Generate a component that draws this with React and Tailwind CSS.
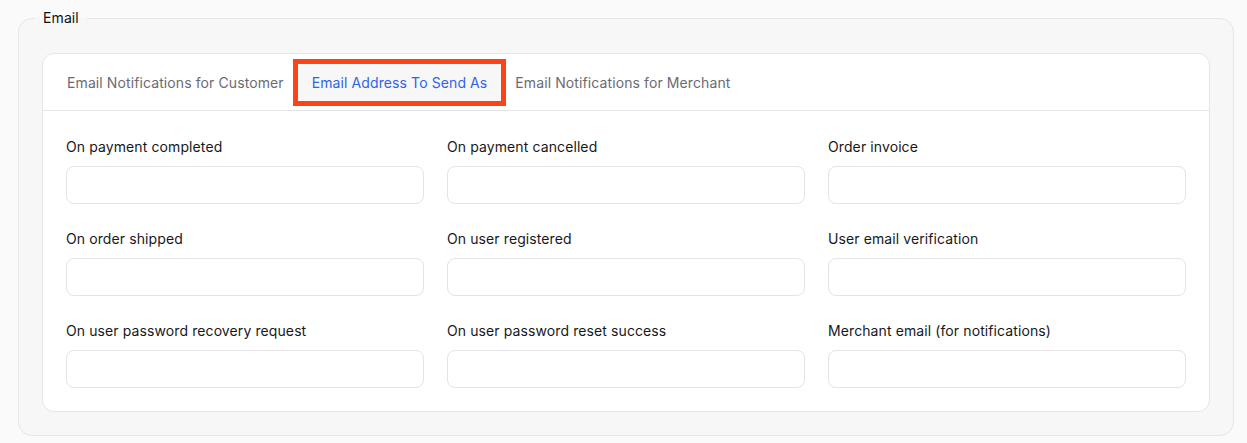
import React from "react";

const fields = [
  "On payment completed",
  "On payment cancelled",
  "Order invoice",
  "On order shipped",
  "On user registered",
  "User email verification",
  "On user password recovery request",
  "On user password reset success",
  "Merchant email (for notifications)",
];

export default function App() {
  return (
    <div
      className="w-[1247px] h-[443px] bg-[#fafafa] pt-2 tracking-[0.1px]"
      style={{ fontFamily: "Inter, 'Liberation Sans', sans-serif" }}
    >
      <fieldset className="ml-[18px] mr-[13px] border border-[#e6e6e6] rounded-[14px] bg-[#f7f7f7] px-[23px] pt-[25px] pb-[23px]">
        <legend className="-ml-[7px] px-2 text-sm leading-5 text-[#111]">Email</legend>
        <div className="bg-white border border-[#e6e6e8] rounded-xl">
          <div className="flex items-center h-[57px] pl-[10px] pt-[1px] border-b border-[#e4e4e7]">
            <div className="h-[37px] px-[14px] flex items-center text-sm text-[#6b6b73]">
              Email Notifications for Customer
            </div>
            <div className="h-[37px] px-[14px] flex items-center text-sm text-[#2f63e8] bg-[#f7f7f8] outline-[5px] outline-solid outline-[#fc4419]">
              Email Address To Send As
            </div>
            <div className="h-[37px] px-[14px] flex items-center text-sm text-[#6b6b73]">
              Email Notifications for Merchant
            </div>
          </div>
          <div className="grid grid-cols-3 gap-x-[23px] gap-y-[25px] px-[23px] pt-[26px] pb-[23px]">
            {fields.map((f) => (
              <div key={f} className="flex flex-col">
                <label className="text-sm leading-5 text-[#18181b] mb-[9px]">{f}</label>
                <input
                  type="text"
                  className="h-[38px] w-full rounded-lg border border-[#e4e4e7] bg-white px-3 text-sm outline-none"
                />
              </div>
            ))}
          </div>
        </div>
      </fieldset>
    </div>
  );
}
